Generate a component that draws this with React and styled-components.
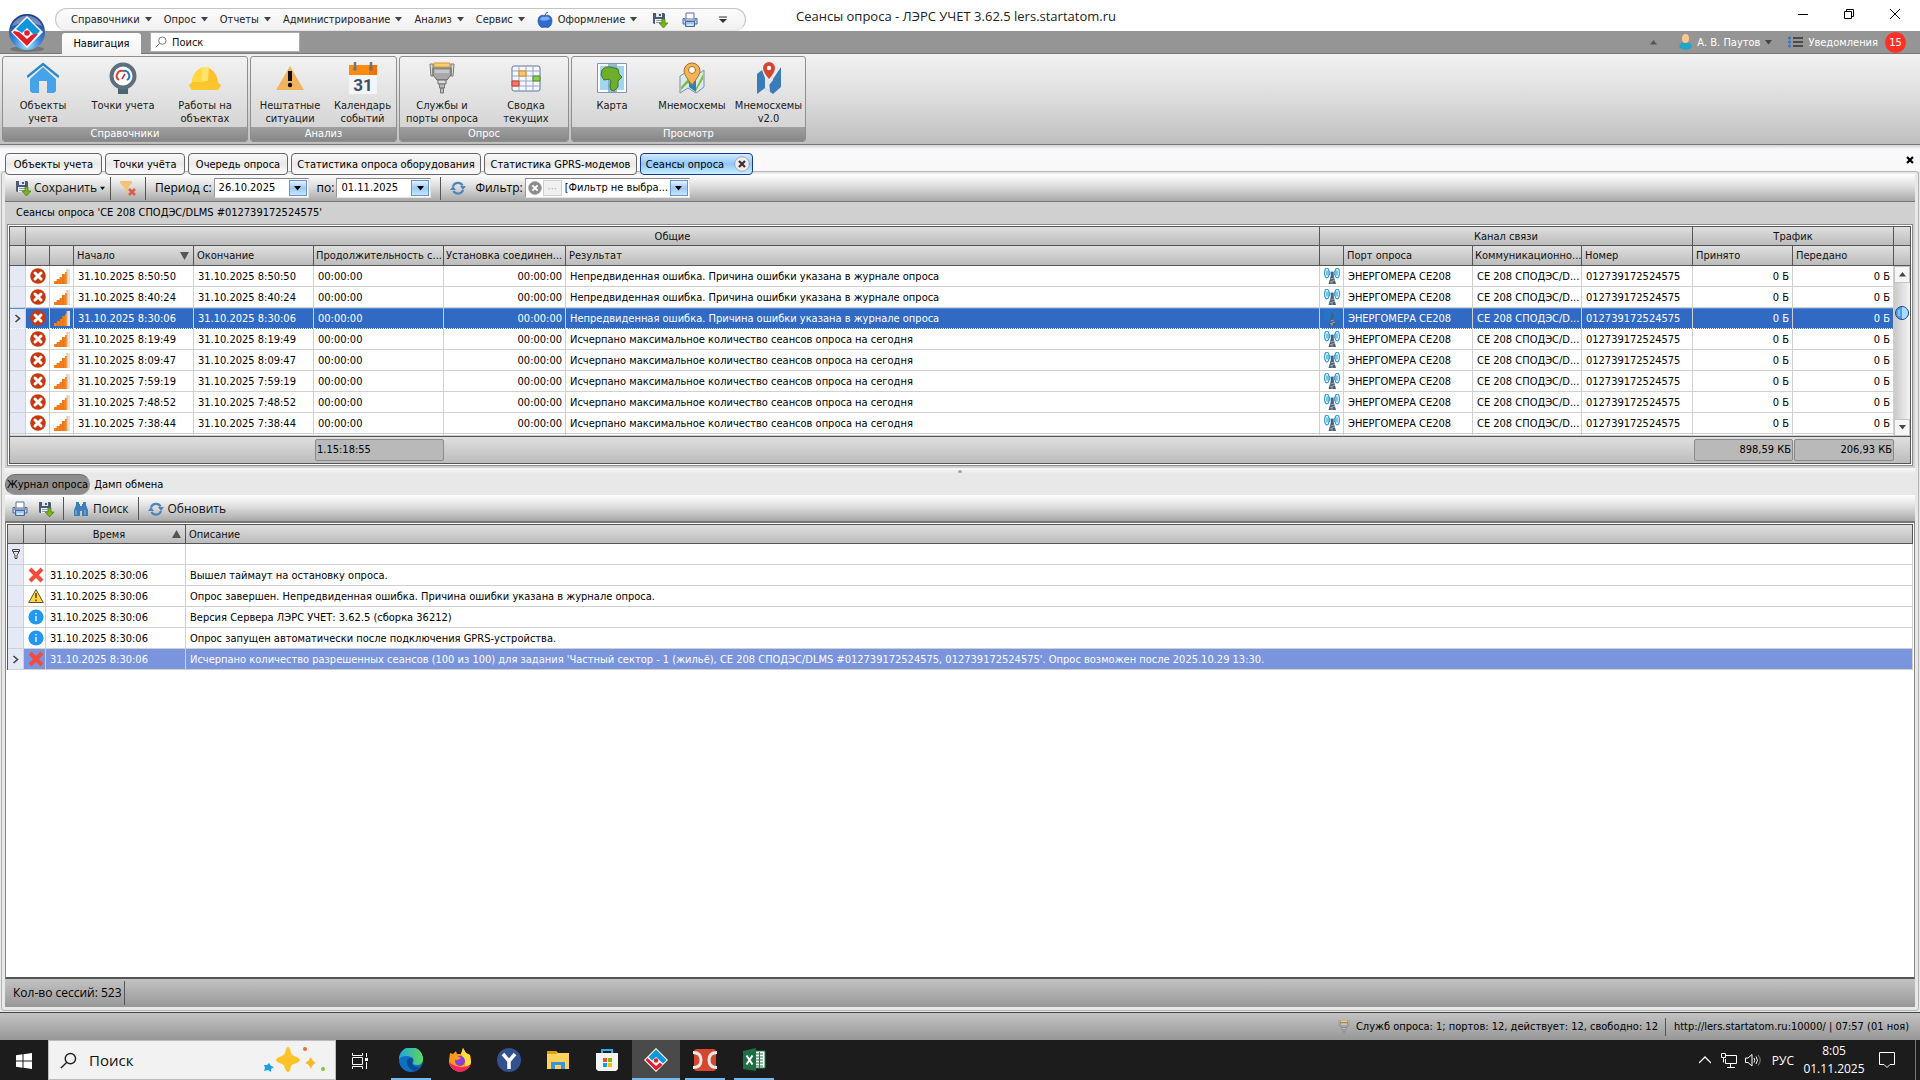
import React, { useState } from "react";
import styled, { createGlobalStyle, css } from "styled-components";

const UI = `"DejaVu Sans Condensed", "Liberation Sans", sans-serif`;
const SEGOE = `"Open Sans", "Noto Sans", sans-serif`;

const Global = createGlobalStyle`
  * { box-sizing: border-box; }
  html, body { margin: 0; padding: 0; }
  body { font-family: ${UI}; font-size: 11px; line-height: 13px; color: #000; background: #e8e8e8; }
  button, input, select { font: inherit; color: inherit; }
  button { background: none; border: 0; padding: 0; margin: 0; cursor: default; white-space: nowrap; }
  svg { display: block; flex: none; }
`;

const Window = styled.div`
  min-height: 100vh;
  display: flex;
  flex-direction: column;
`;

/* ---------- title bar ---------- */
const TitleArea = styled.header`
  position: relative;
`;
const TitleBar = styled.div`
  height: 31px;
  padding-right: 2px;
  display: flex;
  background: #fff;
`;
const QuickBar = styled.nav`
  margin: 8px 0 0 55px;
  width: 691px;
  height: 23px;
  border: 1px solid #c4c4c4;
  border-bottom-color: #e4e4e4;
  border-radius: 12px;
  background: linear-gradient(#fcfcfc, #f1f1f1);
  display: flex;
  align-items: center;
  padding: 0 15px;
  gap: 12px;
`;
const MenuButton = styled.button`
  display: flex;
  align-items: center;
  gap: 5px;
  color: #222;
`;
const IconButton = styled.button`
  display: flex;
  align-items: center;
  justify-content: center;
  width: ${(p) => p.$w || 16}px;
`;
const QuickIcons = styled.div`
  display: flex;
  align-items: center;
  gap: 14px;
  padding-left: 3px;
`;
const Title = styled.h1`
  flex: 1;
  margin: 0;
  padding-left: 50px;
  font: 400 13px/32px ${SEGOE};
  color: #222;
  white-space: nowrap;
`;
const WindowButtons = styled.div`
  display: flex;
  height: 28px;
`;
const WinButton = styled.button`
  width: 46px;
  display: flex;
  align-items: center;
  justify-content: center;
`;
const AppLogo = styled.button`
  position: absolute;
  left: 7px;
  top: 12px;
`;

/* ---------- ribbon ---------- */
const RibbonTabs = styled.div`
  height: 23px;
  background: #959595;
  border-bottom: 1px solid #777;
  padding: 0 14px 0 62px;
  display: flex;
  align-items: center;
`;
const RibbonTab = styled.button`
  align-self: flex-end;
  height: 21px;
  width: 79px;
  margin-bottom: -1px;
  border-radius: 3px 3px 0 0;
  background: linear-gradient(#fff, #f3f3f3);
`;
const SearchBox = styled.label`
  margin-left: 9px;
  width: 150px;
  height: 20px;
  border: 1px solid #ababab;
  background: #fff;
  display: flex;
  align-items: center;
  gap: 5px;
  padding: 0 4px;
`;
const PlainInput = styled.input`
  flex: 1;
  min-width: 0;
  border: 0;
  padding: 0;
  outline: 0;
  background: transparent;
  &::placeholder { color: #111; opacity: 1; }
`;
const UserArea = styled.div`
  margin-left: auto;
  display: flex;
  align-items: center;
  color: #fff;
  gap: 16px;
`;
const UserButton = styled.button`
  display: flex;
  align-items: center;
  gap: 5px;
`;
const Badge = styled.span`
  width: 21px;
  height: 21px;
  margin-left: 2px;
  border-radius: 50%;
  background: #ff3126;
  line-height: 21px;
  text-align: center;
`;
const Ribbon = styled.div`
  height: 91px;
  padding: 2px;
  display: flex;
  gap: 2px;
  background: linear-gradient(#f2f2f2, #dcdcdc 50%, #bfbfbf);
  border-bottom: 1px solid #777;
`;
const Group = styled.section`
  height: 86px;
  border: 1px solid #8f8f8f;
  border-radius: 3px;
  overflow: hidden;
  display: flex;
  flex-direction: column;
  background: linear-gradient(#f2f2f2, #cfcfcf);
`;
const GroupItems = styled.div`
  flex: 1;
  display: flex;
`;
const RibbonItem = styled.button`
  width: ${(p) => p.$w}px;
  padding-top: 5px;
  display: flex;
  flex-direction: column;
  align-items: center;
  gap: 5px;
  white-space: pre-line;
  color: #1a1a1a;
  text-align: center;
`;
const GroupCaption = styled.h2`
  margin: 0;
  height: 14px;
  font: inherit;
  line-height: 14px;
  text-align: center;
  color: #fff;
  background: linear-gradient(#a0a0a0, #868686);
`;

/* ---------- document tabs ---------- */
const DocTabs = styled.div`
  height: 26px;
  padding: 8px 5px 0;
  display: flex;
  gap: 3px;
  background: linear-gradient(#d4d4d4, #f9f9fc 4px);
`;
const DocTab = styled.button`
  position: relative;
  z-index: 1;
  flex: none;
  width: ${(p) => p.$w}px;
  height: 22px;
  border: 1px solid #666;
  border-radius: 4px;
  background: linear-gradient(#fafafa, #e9e9e9 50%, #fdfdfd);
  display: flex;
  align-items: center;
  justify-content: center;
  gap: 10px;
  ${(p) =>
    p.$active &&
    css`
      padding-left: 3px;
      border-color: #17389a;
      background: linear-gradient(#d5eaff, #8fc6fb 50%, #c9f0ff);
    `}
`;
const CloseAll = styled(IconButton)`
  margin-left: auto;
  height: 14px;
  width: 10px;
`;

/* ---------- document panel ---------- */
const Panel = styled.main`
  flex: 1;
  margin: 0 1px;
  padding: 2px 3px 3px;
  border: 1px solid #b4b4b4;
  border-radius: 3px;
  background: #e8e8e8;
  display: flex;
  flex-direction: column;
`;
const Toolbar = styled.div`
  height: 28px;
  padding: 1px ${(p) => p.$pad}px 0;
  display: flex;
  align-items: center;
  background: linear-gradient(#fff, #dedede 45%, #a9a9a9);
  border-bottom: ${(p) => p.$line}px solid #777;
  font: 12px/16px ${SEGOE};
`;
const ToolButton = styled.button`
  display: flex;
  align-items: center;
  gap: ${(p) => p.$gap || 4}px;
  margin-right: ${(p) => p.$r || 0}px;
  color: #111;
`;
const Sep = styled.span`
  width: 1px;
  height: ${(p) => p.$h || 23}px;
  margin: 0 ${(p) => p.$r || 9}px 0 ${(p) => p.$l || 9}px;
  background: #555;
`;
const Field = styled.div`
  display: flex;
  align-items: center;
  gap: 2px;
  margin-right: 8px;
`;
const ComboBox = styled.span`
  width: ${(p) => p.$w}px;
  height: 20px;
  padding: 1px;
  border: 1px solid #999;
  border-color: #888 #e4e4e4 #e4e4e4 #999;
  background: #fff;
  display: flex;
  font: 11px/16px ${UI};
`;
const DropButton = styled.button`
  width: 18px;
  border: 1px solid #6b93c4;
  background: linear-gradient(#e4f2ff, #9fc9f5 50%, #c5e6ff);
  display: flex;
  align-items: center;
  justify-content: center;
`;
const DateInput = styled(PlainInput)`
  padding-left: 3px;
`;
const FilterSelect = styled.select`
  flex: 1;
  min-width: 0;
  appearance: none;
  border: 0;
  outline: 0;
  padding: 0 0 0 3px;
  background: transparent;
`;
const MoreButton = styled.button`
  width: 19px;
  border: 1px solid #d0d0d0;
  background: #f0f0f0;
  color: #aaa;
  line-height: 9px;
`;

const Sessions = styled.section`
  background: #d0d0d0;
  padding: 0 2px 2px;
`;
const Caption = styled.h3`
  margin: 0;
  padding-left: 9px;
  font: inherit;
  line-height: 22px;
`;
const Frame = styled.div`
  border: 1px solid #8a8a8a;
  padding: 1px;
  background: #fff;
`;
const GridBox = styled.div`
  display: flex;
  border: 1px solid #555;
`;
const Grid = styled.table`
  flex: 1;
  width: 100%;
  table-layout: fixed;
  border-spacing: 0;
  background: #fff;
`;
const headSkin = css`
  background: linear-gradient(#dfdfdf, #bcbcbc);
  border-right: 1px solid #555;
  border-bottom: 1px solid #555;
`;
const Th = styled.th`
  ${headSkin}
  height: ${(p) => p.$h || 20}px;
  padding: 0 0 0 ${(p) => (p.$align ? 0 : p.$tight ? 2 : 3)}px;
  font-weight: 400;
  text-align: ${(p) => p.$align || "left"};
  white-space: nowrap;
  color: #111;
`;
const ThLine = styled.span`
  display: flex;
  align-items: center;
  padding-right: 4px;
`;
const ThText = styled.span`
  flex: 1;
`;
const Td = styled.td`
  height: ${(p) => p.$h || 21}px;
  padding: 0 ${(p) => (p.$right ? 3 : 0)}px 0 4px;
  border-right: 1px solid #d0d0d0;
  border-bottom: 1px solid #d0d0d0;
  text-align: ${(p) => (p.$right ? "right" : "left")};
  white-space: nowrap;
`;
const MarkTd = styled(Td)`
  && { background: #e4e9f5; color: #444; }
  padding: 0 0 0 4px;
`;
const IconTd = styled(Td)`
  padding: 0 0 0 4px;
`;
const Row = styled.tr`
  ${(p) =>
    p.$focus &&
    css`
      color: #fff;
      td { background: #316ac5; border-bottom: 1px dotted #fff; box-shadow: inset 0 1px #5d8ad6; }
    `}
  ${(p) =>
    p.$soft &&
    css`
      color: #fff;
      td { background: #7a94de; }
    `}
`;
const FootTd = styled.td`
  height: 27px;
  padding: 1px 0 1px 1px;
  border-top: 1px solid #555;
  background: linear-gradient(#dfdfdf, #bcbcbc);
`;
const Sum = styled.div`
  height: 22px;
  padding: 0 1px;
  border: 1px solid #8a8a8a;
  border-radius: 2px;
  background: #b9b9b9;
  line-height: 20px;
  text-align: ${(p) => (p.$right ? "right" : "left")};
`;
const Side = styled.div`
  width: 16px;
  display: flex;
  flex-direction: column;
`;
const SideHead = styled.div`
  ${headSkin}
  border-right: 0;
  height: ${(p) => p.$h}px;
`;
const SideFoot = styled.div`
  height: 27px;
  border-top: 1px solid #555;
  background: linear-gradient(#dfdfdf, #bcbcbc);
`;
const Scroll = styled.div`
  flex: 1;
  background: linear-gradient(90deg, #c9c9c9, #f4f4f4);
  display: flex;
  flex-direction: column;
  align-items: stretch;
`;
const ScrollButton = styled.button`
  height: 17px;
  border: 1px solid #c4c4c4;
  background: #f6f6f6;
  display: flex;
  align-items: center;
  justify-content: center;
`;
const ScrollTrack = styled.div`
  flex: 1;
  padding: 23px 1px 0;
`;

const Splitter = styled.div`
  height: 6px;
  display: flex;
  align-items: center;
  justify-content: center;
  background: linear-gradient(#f8f8f8, #e8e8e8);
  &::after { content: ""; width: 4px; height: 3px; border-radius: 2px; background: #aaa; }
`;
const LogTabs = styled.div`
  height: 21px;
  display: flex;
  align-items: stretch;
`;
const LogTab = styled.button`
  padding: 0 3px;
  border: 1px solid transparent;
  ${(p) =>
    p.$active &&
    css`
      padding: 0 1px;
      background: #8d8d8d;
      border-color: #707070 #9a9a9a #9a9a9a #707070;
      border-radius: 10px;
    `}
`;
const LogFrame = styled.section`
  flex: 1;
  border: 1px solid #888;
  border-top: 0;
  border-bottom: 2px solid #555;
  background: #fff;
  padding: 1px;
`;
const LogBox = styled.div`
  border-top: 1px solid #555;
  border-left: 1px solid #555;
`;
const CountBar = styled.footer`
  height: 28px;
  padding: 2px 8px;
  display: flex;
  align-items: center;
  background: linear-gradient(#c3c3c3, #979797);
  font: 12px/16px ${SEGOE};
`;
const StatusBar = styled.footer`
  margin-top: 1px;
  height: 28px;
  padding: 0 11px;
  border-top: 1px solid #444;
  display: flex;
  align-items: center;
  justify-content: flex-end;
  background: linear-gradient(#c3c3c3, #979797);
`;
const StatusText = styled.span`
  margin-left: 5px;
`;
const StatusLink = styled.a`
  color: inherit;
  text-decoration: none;
`;

/* ---------- taskbar ---------- */
const Taskbar = styled.footer`
  height: 40px;
  background: #1c1c1c;
  color: #fff;
  display: flex;
  font-family: ${SEGOE};
`;
const Slot = styled.button`
  width: 48px;
  margin-right: ${(p) => p.$gap || 0}px;
  padding: 2px ${(p) => (p.$active ? 0 : 4)}px 0;
  background: ${(p) => (p.$active ? "#4a4a4a" : "none")};
  display: flex;
  flex-direction: column;
  align-items: stretch;
`;
const SlotIcon = styled.span`
  flex: 1;
  display: flex;
  align-items: center;
  justify-content: center;
`;
const Underline = styled.span`
  height: 2px;
  background: ${(p) => (p.$on ? "#76b9ed" : "transparent")};
`;
const TaskSearch = styled.label`
  width: 288px;
  height: 40px;
  padding: 0 9px 0 11px;
  border: 1px solid #bdbdbd;
  background: #f2f2f2;
  color: #333;
  display: flex;
  align-items: center;
  gap: 12px;
  font-size: 15px;
`;
const Tray = styled.div`
  margin-left: auto;
  display: flex;
  align-items: center;
  padding-right: 4px;
`;
const TrayButton = styled.button`
  display: flex;
  margin-right: ${(p) => p.$r || 0}px;
  font-size: 12px;
`;
const Clock = styled.button`
  width: 62px;
  margin-right: 14px;
  font-size: 12px;
  line-height: 18px;
  text-align: center;
  white-space: pre-line;
`;
const DesktopEdge = styled.span`
  align-self: stretch;
  width: 1px;
  margin-left: 20px;
  background: #777;
`;

/* ---------- icons ---------- */
const Svg = ({ w = 16, h, vb, children }) => (
  <svg width={w} height={h || w} viewBox={vb || `0 0 ${w} ${h || w}`} aria-hidden="true">
    {children}
  </svg>
);
const Down = ({ c = "#444", w = 7, h = 5 }) => (
  <Svg w={w} h={h} vb="0 0 7 5"><path d="M0 0h7L3.500 4.500z" fill={c} /></Svg>
);
const Up = ({ c = "#444", w = 7, h = 5 }) => (
  <Svg w={w} h={h} vb="0 0 7 5"><path d="M0 4.500h7L3.500 0z" fill={c} /></Svg>
);
const SortDown = () => <Svg w={9} h={8}><path d="M0 0h9L4.500 8z" fill="#555" /></Svg>;
const SortUp = () => <Svg w={9} h={8}><path d="M0 8h9L4.500 0z" fill="#555" /></Svg>;
const LersMark = () => (
  <>
    <path d="M12 0 24 12 12 24 0 12z" fill="#fff" />
    <path d="M12 1.500 22.500 12 19 15.500 12 9 8 12.500 4.500 9z" fill="#0c96dc" />
    <path d="M3.500 10 12 18 16 14.500 18.500 17 12 22.500 1.500 12z" fill="#e41b2b" />
    <circle cx="12" cy="12.500" r="2.200" fill="#e41b2b" />
  </>
);
const Logo = () => (
  <svg width="40" height="42" viewBox="0 0 40 42" aria-hidden="true">
    <defs>
      <radialGradient id="orb" cx=".5" cy=".85" r=".9">
        <stop offset="0" stopColor="#9fe6ff" /><stop offset=".4" stopColor="#3f86dc" /><stop offset="1" stopColor="#17307c" />
      </radialGradient>
    </defs>
    <ellipse cx="20" cy="37" rx="17" ry="3" fill="#555" opacity=".5" />
    <circle cx="20" cy="20" r="18" fill="url(#orb)" />
    <path d="M5 14a16 16 0 0 1 30 0q-15-7-30 0z" fill="#fff" opacity=".35" />
    <path d="M20 4 36 20 20 36 4 20z" fill="#fff" />
    <path d="M20 6 33 19 28 24 20 16 15 21 9 17z" fill="#0c96dc" />
    <path d="M7 19 12 20 20 27 25 22.500 31 22 20 34 6 20.500z" fill="#e41b2b" />
    <circle cx="20" cy="21" r="2.800" fill="#e41b2b" />
  </svg>
);
const Save = () => (
  <Svg>
    <path d="M1 1h11l1 1v10H2l-1-1z" fill="#4a5a72" /><path d="M4 1h6v4H4z" fill="#dfe6ef" /><path d="M7 2h2v2H7z" fill="#4a5a72" /><path d="M3 7h8v5H3z" fill="#eef2f7" />
    <path d="M4 8.500h6M4 10.500h6" stroke="#8a9ab0" />
    <path d="M10 7h3v4h3l-4.500 5L7 11h3z" fill="#7cb518" stroke="#3f7d0a" strokeWidth=".7" />
  </Svg>
);
const Print = () => (
  <Svg>
    <path d="M4 1h8v6H4z" fill="#fff" stroke="#56709e" /><path d="M1 6.500h2V9h10V6.500h2V12H1z" fill="#c9d8ef" stroke="#4b659a" />
    <path d="M3.500 9.500h9v5h-9z" fill="#9cc9f5" stroke="#4b659a" /><path d="M5 13h6" stroke="#fff" />
  </Svg>
);
const Apple = () => (
  <Svg>
    <path d="M8 4C5 2 1 4 1 9c0 4 3 7 5 6.500 1-.5 3-.5 4 0 2 .5 5-2.500 5-6.500 0-5-4-7-7-5z" fill="#2e6bd0" stroke="#1c3f94" strokeWidth=".6" />
    <path d="M3 8c0-3 3-4 5-3 2-1 4 0 5 2-3 2-7 2-10 1z" fill="#9cc8fa" opacity=".7" /><path d="M8 4C8 2 9 1 11 0" stroke="#1c3f94" fill="none" />
  </Svg>
);
const Lens = ({ w = 12, c = "#777" }) => (
  <Svg w={w} vb="0 0 18 18"><circle cx="11" cy="7" r="5.500" fill="none" stroke={c} strokeWidth="1.500" /><path d="M7 11 1 17" stroke={c} strokeWidth="1.500" /></Svg>
);
const Refresh = () => (
  <Svg>
    <path d="M3 6.500a5.200 5.200 0 0 1 9.500-1" fill="none" stroke="#4c86bd" strokeWidth="2.300" /><path d="M10 6h6l-3 4z" fill="#4c86bd" />
    <path d="M13 10a5.200 5.200 0 0 1-9.500 1" fill="none" stroke="#4c86bd" strokeWidth="2.300" /><path d="M0 10h6L3 6z" fill="#4c86bd" />
  </Svg>
);
const Funnel = () => (
  <Svg>
    <path d="M0 1h12v2L8 8v6l-3-2V8L0 3z" fill="#f3c277" /><path d="m9 9 6 6M15 9l-6 6" stroke="#dd5b3e" strokeWidth="2.500" />
  </Svg>
);
const Binoculars = () => (
  <Svg>
    <path d="M3 1h3v2h1v2h2V3h1V1h3v3l2 5v6H9v-5H7v5H1V9l2-5z" fill="#3f7fb8" /><path d="M3 9v5M12 9v5" stroke="#8cb8de" />
  </Svg>
);
const ErrorIcon = () => (
  <Svg>
    <circle cx="8" cy="8" r="7.800" fill="#c8380f" /><path d="M5 5l6 6M11 5l-6 6" stroke="#fff" strokeWidth="3" strokeLinecap="round" />
  </Svg>
);
const Signal = () => (
  <Svg>
    <path d="M0 16v-3h3v-2h3V9h2V6h3V4h2v12z" fill="#f58220" /><path d="M3 11v5M6 9v7M9 6v10" stroke="#d9600b" strokeWidth=".6" />
    <path d="M13 1h3v15h-3z" fill="#dfe3ea" /><path d="M13 1v15" stroke="#f7b35b" />
  </Svg>
);
const Antenna = ({ dim }) => (
  <Svg>
    <g fill="none" stroke={dim ? "#1c7fc4" : "#2a9bd8"} strokeWidth="1.200">
      <ellipse cx="2.800" cy="5" rx="2.200" ry="4.800" /><path d="M3 2.500v5M5.500 3q1 2 0 4" />
      <ellipse cx="13.200" cy="5" rx="2.200" ry="4.800" /><path d="M13 2.500v5M10.500 3q-1 2 0 4" />
    </g>
    <path d="M7 6h2.500l.5 3 2 7H4.500l2-7z" fill={dim ? "#456080" : "#4d6072"} /><path d="m6.500 11 3.500-1M6 14l5-2M8 13v3" stroke="#b8c4d0" strokeWidth=".7" />
    <circle cx="8.200" cy="5" r="1.400" fill="#4d6072" />
  </Svg>
);
const RedCross = () => (
  <Svg><path d="m2 2 12 12M14 2 2 14" stroke="#f44b3a" strokeWidth="4" /></Svg>
);
const Warn = () => (
  <Svg>
    <path d="M8 1.500 15.300 14.500H.7z" fill="#ffd54a" stroke="#665322" strokeLinejoin="round" /><path d="M8 5v5M8 11.500v1.800" stroke="#5b4a12" strokeWidth="1.600" />
  </Svg>
);
const Info = () => (
  <Svg><circle cx="8" cy="8" r="7.600" fill="#2196f3" /><path d="M8 7v5M8 4v1.600" stroke="#d5ecff" strokeWidth="1.600" /></Svg>
);
const Mark = () => (
  <Svg w={7} h={9}><path d="m1.500 1 4 3.500-4 3.500" fill="none" stroke="#444" strokeWidth="1.600" /></Svg>
);
const FilterMark = () => (
  <Svg w={8} h={10}><path d="M.5.500h7v2h-7zM1.500 3v1L3 6v3.500h2V6l1.500-2V3" fill="none" stroke="#444" /></Svg>
);
const Plug = ({ w = 32 }) => (
  <Svg w={w} vb="0 0 32 32">
    <path d="M8 1h16v4H8z" fill="#f9cf75" stroke="#d8962a" /><path d="M4 2h3v12H5zM25 2h3l-1 12h-2z" fill="#ddd" stroke="#777" />
    <path d="M7 6h18v7l-4 5H11l-4-5z" fill="#a8a8a8" stroke="#666" /><path d="M9 8h14v3H9z" fill="#c8c8c8" />
    <path d="M12 18h8v4h-8z" fill="#ddd" stroke="#666" /><path d="M13.500 22h5v4h-5zM14.500 26h3v5h-3z" fill="#bbb" stroke="#777" />
  </Svg>
);
const big = {
  home: (
    <Svg w={32}>
      <path d="M16 5 29 17v12l-2 2h-7V19h-8v12H5l-2-2V17z" fill="#46a3ea" />
      <path d="M0 17 16 3l16 14" fill="none" stroke="#ececec" strokeWidth="2" />
      <path d="M0 15 16 2l16 13" fill="none" stroke="#2f86c8" strokeWidth="2.500" />
    </Svg>
  ),
  gauge: (
    <Svg w={32}>
      <path d="M11 24h10v8H11z" fill="#4d6475" /><circle cx="16" cy="14" r="11.500" fill="#fff" stroke="#5b6f7f" strokeWidth="4" />
      <path d="M12 18a5 5 0 0 1 4-9" fill="none" stroke="#e0402e" strokeWidth="2" /><path d="M16 9a5 5 0 0 1 4 9" fill="none" stroke="#2878d0" strokeWidth="2" />
      <path d="m15 17 3-5" stroke="#c0392b" strokeWidth="1.500" />
    </Svg>
  ),
  helmet: (
    <Svg w={32}>
      <path d="M3 22C3 13 8 7 13 6l1-1h4l1 1c5 1 10 7 10 16z" fill="#fdc02f" /><path d="M3 22C3 13 8 7 13 6v9l3-10v17z" fill="#ffd83b" />
      <path d="M12 5h8l-1 14h-6z" fill="#ffe36a" /><path d="M0 24q2-4 5-4h22q3 0 5 4l-3 4H3z" fill="#fbc52d" />
    </Svg>
  ),
  alert: (
    <Svg w={32}><path d="M16 4 30 28H2z" fill="#f0b45f" /><path d="M14 9h4v10h-4z" fill="#111" /><circle cx="16" cy="23" r="2.200" fill="#111" /></Svg>
  ),
  calendar: (
    <Svg w={32}>
      <path d="M2 12h28v20H2z" fill="#f3f6f8" /><path d="M2 3h28v10H2z" fill="#ff8a0d" /><path d="M22 3h8v10h-8z" fill="#ff6f00" />
      <path d="M8 0v6M24 0v6" stroke="#667780" strokeWidth="2.500" /><circle cx="8" cy="7" r="1.800" fill="#667780" /><circle cx="24" cy="7" r="1.800" fill="#667780" />
      <text x="16" y="29" fontSize="17" fontWeight="700" textAnchor="middle" fill="#3c5261" fontFamily="Roboto, sans-serif">31</text>
    </Svg>
  ),
  plug: <Plug />,
  table: (
    <Svg w={32}>
      <rect x="2" y="4" width="28" height="25" rx="2" fill="#f6f8fd" stroke="#6174a6" />
      <path d="M9 4v25M16 4v25M23 4v25M2 9h28M2 14h28M2 19h28M2 24h28" stroke="#95a3c8" fill="none" />
      <path d="M9 9h7v5H9z" fill="#ffc76b" stroke="#d88a1a" /><path d="M23 14h7v5h-7z" fill="#8fce4a" stroke="#4f9218" /><path d="M2 19h7v5H2z" fill="#f07a6a" stroke="#c93a2a" />
    </Svg>
  ),
  map: (
    <Svg w={32}>
      <path d="M1.500 1.500h29v29h-29z" fill="#fff" stroke="#8097b4" /><path d="M4 4h24v24H4z" fill="#a3d4f1" /><path d="M12 2h9v28h-9z" fill="#6f9cc4" opacity=".7" />
      <path d="M6 8q3-4 8-3l4 1 4 1 1 5 3 3-4 4v6l-4 4-3-1-1-4 1-5-2-2-5 1-3-5z" fill="#6fae2c" stroke="#3f7d18" />
    </Svg>
  ),
  pinGold: (
    <Svg w={32}>
      <path d="M4 14 12 9l8 5 8-6v17l-8 6-8-5-8 5z" fill="#d8e9f4" stroke="#7e8f9d" /><path d="m5 25 7-8 8 9 7-14v5l-7 12-8-8-7 7z" fill="#7dbb3a" /><path d="M13 19 20 16v14l-7-5z" fill="#2e80b8" />
      <path d="M16 23Q8 13 8 9a8 8 0 0 1 16 0q0 4-8 14z" fill="#f2b457" stroke="#a9702a" /><circle cx="16" cy="8" r="3.500" fill="#fff" stroke="#a9702a" />
    </Svg>
  ),
  pinRed: (
    <Svg w={32}>
      <path d="M4 12 9 8l3 8v10l-8 6zM12 26l8 6V18l-3 4M20 17l8-12v20l-8 7z" fill="#3a7cb8" />
      <path d="M12 17v9l5 4-1-12z" fill="#e6e6e6" />
      <path d="M16 17Q10 10 10 6a6 6 0 0 1 12 0q0 4-6 11z" fill="#d8452f" /><circle cx="16" cy="6" r="2.200" fill="#fff" />
    </Svg>
  ),
};
const Person = () => (
  <Svg w={13} h={16}><path d="M0 13q1-5 6.500-5T13 13q-3 3-6.500 3T0 13z" fill="#1fa6c8" /><ellipse cx="6.500" cy="4.500" rx="3.500" ry="4.500" fill="#fbc98e" /></Svg>
);
const ListIcon = () => (
  <Svg w={15} h={12}>
    <path d="M5 2h10M5 6h10M5 10h10" stroke="#000" /><circle cx="1.500" cy="2" r="1.500" fill="#2b78c5" /><circle cx="1.500" cy="6" r="1.500" fill="#2b78c5" /><circle cx="1.500" cy="10" r="1.500" fill="#2b78c5" />
  </Svg>
);
const CloseBall = ({ w = 16, bg = "#ececec", c = "#333" }) => (
  <Svg w={w} vb="0 0 16 16"><circle cx="8" cy="8" r="7.300" fill={bg} stroke="#9a9a9a" strokeWidth=".8" /><path d="m5 5 6 6M11 5l-6 6" stroke={c} strokeWidth="2.200" /></Svg>
);
const Sparkles = () => (
  <Svg w={62} h={26}>
    <path d="M24 0q2 0 3 6 1 2 3 3 6 2 6 4t-6 4q-2 0-3 2-1 6-3 6t-4-6q0-1-2-2-6-2-6-4t6-4q2-1 3-3 1-6 3-6z" fill="#fcc327" />
    <path d="M47 10q1 4 5 6-4 1-5 6-2-5-6-6 4-2 6-6z" fill="#f9b626" /><path d="m5 16 2 3 3 1-3 2v3l-3-2-4 1 1-3-1-3h3z" fill="#1ba0e8" />
    <circle cx="41" cy="2" r="2" fill="#ee6a2d" /><circle cx="59" cy="22" r="2" fill="#7fc342" />
  </Svg>
);
const tasks = [
  { name: "Microsoft Edge", open: true, icon: (
    <Svg w={24}>
      <defs><linearGradient id="eg" x1="0" x2="1"><stop offset="0" stopColor="#1fa4e0" /><stop offset="1" stopColor="#5fd85b" /></linearGradient></defs>
      <circle cx="12" cy="12" r="12" fill="#0f6fc4" /><path d="M0 11A12 12 0 0 1 24 11c0 4-3 6-6 6-3 0-4-1-4-2 1-2 1-5-2-6C8 7 2 8 0 11z" fill="url(#eg)" />
      <path d="M8 12c-1 5 3 10 8 11l6-5c-3 2-8 1-9-3 0-2 1-2 1-4-2-2-5-1-6 1z" fill="#0a4a94" />
    </Svg>) },
  { name: "Firefox", icon: (
    <Svg w={24}>
      <path d="M2 5l3 1 3-3 1 3 4 0 2-6 3 5 4 2 1 6a11 10.500 0 1 1-22 0z" fill="#ff9a1f" /><path d="M15 0l3 5 4 2 1 7q-1 6-7 8 4-8-3-16z" fill="#ffdd3c" />
      <path d="M1 14q2 9 11 10 8-1 11-8-5 4-11 3-7-1-11-5z" fill="#f0285c" /><circle cx="12" cy="13" r="5" fill="#8b3fd6" /><path d="M5 9q4-2 8 1-2 2-5 2z" fill="#ff9a1f" />
    </Svg>) },
  { name: "Яндекс Браузер", icon: (
    <Svg w={24}><circle cx="12" cy="12" r="12" fill="#33508f" /><path d="m6 6 6 7 6-7M12 13v8" fill="none" stroke="#fff" strokeWidth="3.500" /></Svg>) },
  { name: "Проводник", icon: (
    <Svg w={24}><path d="M1 3h9l2 2h11v16H1z" fill="#ffd35c" /><path d="M1 3h9l1 3H1z" fill="#e0a010" /><path d="M5 21v-7h14v7h-4v-4H9v4z" fill="#3d92d8" /></Svg>) },
  { name: "Microsoft Store", icon: (
    <Svg w={24}>
      <path d="M7 7V2h10v5" fill="none" stroke="#22b4ee" strokeWidth="2" /><path d="M1 5h22v16l-2 2H3l-2-2z" fill="#f5f5f5" />
      <path d="M8 10h4v4H8z" fill="#f25022" /><path d="M13 10h4v4h-4z" fill="#7fba00" /><path d="M8 15h4v4H8z" fill="#00a4ef" /><path d="M13 15h4v4h-4z" fill="#ffb900" />
    </Svg>) },
  { name: "ЛЭРС УЧЕТ", open: true, active: true, icon: <Svg w={24}><LersMark /></Svg> },
  { name: "Диспетчер", open: true, icon: (
    <Svg w={24}><rect x="1" y="1" width="22" height="22" rx="3" fill="#d8452f" /><path d="M0 4.500q8 0 8 7.500t-8 7.500M24 4.500q-8 0-8 7.500t8 7.500" fill="none" stroke="#eaeaea" strokeWidth="3" /></Svg>) },
  { name: "Excel", open: true, icon: (
    <Svg w={24}>
      <path d="M12 3h11v17H12z" fill="#fff" stroke="#1f7a45" /><path d="M14 6h7M14 9h7M14 12h7M14 15h7M14 18h7M17.500 4v16" stroke="#1f7a45" /><path d="M1 3l13-3v23L1 21z" fill="#1d7044" />
      <path d="m4.500 7.500 6 9M10.500 7.500l-6 9" stroke="#fff" strokeWidth="2" />
    </Svg>) },
];

/* ---------- data ---------- */
const menus = ["Справочники", "Опрос", "Отчеты", "Администрирование", "Анализ", "Сервис"];
const groups = [
  ["Справочники", [["home", "Объекты\nучета", 80], ["gauge", "Точки учета", 80], ["helmet", "Работы на\nобъектах", 84]]],
  ["Анализ", [["alert", "Нештатные\nситуации", 78], ["calendar", "Календарь\nсобытий", 67]]],
  ["Опрос", [["plug", "Службы и\nпорты опроса", 84], ["table", "Сводка\nтекущих", 84]]],
  ["Просмотр", [["map", "Карта", 80], ["pinGold", "Мнемосхемы", 80], ["pinRed", "Мнемосхемы\nv2.0", 73]]],
];
const docs = [
  ["Объекты учета", 97],
  ["Точки учёта", 80],
  ["Очередь опроса", 100],
  ["Статистика опроса оборудования", 190],
  ["Статистика GPRS-модемов", 153],
  ["Сеансы опроса", 113],
];
const unexpected = "Непредвиденная ошибка. Причина ошибки указана в журнале опроса";
const exhausted = "Исчерпано максимальное количество сеансов опроса на сегодня";
const sessions = [
  ["8:50:50", unexpected], ["8:40:24", unexpected], ["8:30:06", unexpected], ["8:19:49", exhausted],
  ["8:09:47", exhausted], ["7:59:19", exhausted], ["7:48:52", exhausted], ["7:38:44", exhausted],
];
const sessionCols = [16, 24, 24, 120, 120, 130, 122, null, 24, 129, 109, 111, 100, 101];
const log = [
  [RedCross, "Вышел таймаут на остановку опроса."],
  [Warn, "Опрос завершен. Непредвиденная ошибка. Причина ошибки указана в журнале опроса."],
  [Info, "Версия Сервера ЛЭРС УЧЕТ: 3.62.5 (сборка 36212)"],
  [Info, "Опрос запущен автоматически после подключения GPRS-устройства."],
  [RedCross, "Исчерпано количество разрешенных сеансов (100 из 100) для задания 'Частный сектор - 1 (жильё), СЕ 208 СПОДЭС/DLMS #012739172524575, 012739172524575'. Опрос возможен после 2025.10.29 13:30."],
];

const DateField = ({ id, label, value }) => {
  const [v, setV] = useState(value);
  return (
    <Field>
      <label htmlFor={id}>{label}</label>
      <ComboBox $w={95}>
        <DateInput id={id} value={v} onChange={(e) => setV(e.target.value)} />
        <DropButton aria-label="Открыть календарь"><Down c="#000" /></DropButton>
      </ComboBox>
    </Field>
  );
};

const SessionsTable = () => (
  <Frame>
    <GridBox>
      <Grid>
        <colgroup>{sessionCols.map((w, i) => <col key={i} width={w || undefined} />)}</colgroup>
        <thead>
          <tr>
            <Th $h={19} />
            <Th $h={19} colSpan={7} $align="center">Общие</Th>
            <Th $h={19} colSpan={4} $align="center">Канал связи</Th>
            <Th $h={19} colSpan={2} $align="center">Трафик</Th>
          </tr>
          <tr>
            <Th /><Th /><Th />
            <Th><ThLine><ThText>Начало</ThText><SortDown /></ThLine></Th>
            <Th>Окончание</Th>
            <Th $tight>Продолжительность с...</Th>
            <Th $tight>Установка соединен...</Th>
            <Th>Результат</Th>
            <Th />
            <Th>Порт опроса</Th>
            <Th $tight>Коммуникационно...</Th>
            <Th>Номер</Th>
            <Th>Принято</Th>
            <Th>Передано</Th>
          </tr>
        </thead>
        <tbody>
          {sessions.map(([time, result], i) => {
            const focus = i === 2;
            return (
              <Row key={time} $focus={focus}>
                <MarkTd>{focus && <Mark />}</MarkTd>
                <IconTd><ErrorIcon /></IconTd>
                <IconTd><Signal /></IconTd>
                <Td>31.10.2025 {time}</Td>
                <Td>31.10.2025 {time}</Td>
                <Td>00:00:00</Td>
                <Td $right>00:00:00</Td>
                <Td>{result}</Td>
                <IconTd><Antenna dim={focus} /></IconTd>
                <Td>ЭНЕРГОМЕРА CE208</Td>
                <Td>СЕ 208 СПОДЭС/D...</Td>
                <Td>012739172524575</Td>
                <Td $right>0 Б</Td>
                <Td $right>0 Б</Td>
              </Row>
            );
          })}
          <tr>
            <MarkTd $h={2} />
            {sessionCols.slice(1).map((_, i) => <Td key={i} $h={2} />)}
          </tr>
        </tbody>
        <tfoot>
          <tr>
            <FootTd colSpan={5} />
            <FootTd><Sum>1.15:18:55</Sum></FootTd>
            <FootTd colSpan={6} />
            <FootTd><Sum $right>898,59 КБ</Sum></FootTd>
            <FootTd><Sum $right>206,93 КБ</Sum></FootTd>
          </tr>
        </tfoot>
      </Grid>
      <Side>
        <SideHead $h={19} />
        <SideHead $h={20} />
        <Scroll>
          <ScrollButton aria-label="Вверх"><Up /></ScrollButton>
          <ScrollTrack>
            <Svg w={14}>
              <circle cx="7" cy="7" r="6.500" fill="#4f9bea" stroke="#23407c" /><path d="M7 1a6 6 0 0 1 0 12z" fill="#a8dcff" /><path d="M4 4v6" stroke="#cfe8ff" />
            </Svg>
          </ScrollTrack>
          <ScrollButton aria-label="Вниз"><Down /></ScrollButton>
        </Scroll>
        <SideFoot />
      </Side>
    </GridBox>
  </Frame>
);

const LogTable = () => (
  <LogBox>
    <Grid>
      <colgroup><col width={16} /><col width={22} /><col width={140} /><col /></colgroup>
      <thead>
        <tr>
          <Th $h={19} /><Th $h={19} />
          <Th $h={19} $align="center"><ThLine><ThText>Время</ThText><SortUp /></ThLine></Th>
          <Th $h={19}>Описание</Th>
        </tr>
      </thead>
      <tbody>
        <tr><MarkTd><FilterMark /></MarkTd><Td /><Td /><Td /></tr>
        {log.map(([Icon, text], i) => {
          const sel = i === log.length - 1;
          return (
            <Row key={i} $soft={sel}>
              <MarkTd>{sel && <Mark />}</MarkTd>
              <IconTd><Icon /></IconTd>
              <Td>31.10.2025 8:30:06</Td>
              <Td>{text}</Td>
            </Row>
          );
        })}
      </tbody>
    </Grid>
  </LogBox>
);

export default function App() {
  return (
    <Window>
      <Global />
      <TitleArea>
        <TitleBar>
          <QuickBar aria-label="Меню">
            {menus.map((m) => <MenuButton key={m}>{m}<Down /></MenuButton>)}
            <MenuButton><Apple />Оформление<Down /></MenuButton>
            <QuickIcons>
              <IconButton aria-label="Сохранить"><Save /></IconButton>
              <IconButton aria-label="Печать"><Print /></IconButton>
              <IconButton aria-label="Настройка панели" $w={22}>
                <Svg w={8} h={8}><path d="M0 1h8" stroke="#333" /><path d="M0 3h8L4 7z" fill="#333" /></Svg>
              </IconButton>
            </QuickIcons>
          </QuickBar>
          <Title>Сеансы опроса - ЛЭРС УЧЕТ 3.62.5 lers.startatom.ru</Title>
          <WindowButtons>
            <WinButton aria-label="Свернуть"><Svg w={10}><path d="M0 5.500h10" stroke="#000" /></Svg></WinButton>
            <WinButton aria-label="Восстановить"><Svg w={10}><path d="M.5 2.500h7v7h-7zM2.500 2.500v-2h7v7h-2" fill="none" stroke="#000" /></Svg></WinButton>
            <WinButton aria-label="Закрыть"><Svg w={10}><path d="m0 0 10 10M10 0 0 10" stroke="#000" /></Svg></WinButton>
          </WindowButtons>
        </TitleBar>
        <RibbonTabs>
          <RibbonTab>Навигация</RibbonTab>
          <SearchBox><Lens /><PlainInput placeholder="Поиск" aria-label="Поиск по меню" /></SearchBox>
          <UserArea>
            <IconButton aria-label="Свернуть ленту" $w={20}><Up c="#555" /></IconButton>
            <UserButton><Person />А. В. Паутов<Down /></UserButton>
            <UserButton><ListIcon />Уведомления<Badge>15</Badge></UserButton>
          </UserArea>
        </RibbonTabs>
        <AppLogo aria-label="ЛЭРС УЧЕТ"><Logo /></AppLogo>
      </TitleArea>
      <Ribbon>
        {groups.map(([name, items]) => (
          <Group key={name}>
            <GroupItems>
              {items.map(([icon, label, w]) => (
                <RibbonItem key={label} $w={w}>{big[icon]}<span>{label}</span></RibbonItem>
              ))}
            </GroupItems>
            <GroupCaption>{name}</GroupCaption>
          </Group>
        ))}
      </Ribbon>
      <DocTabs>
        {docs.map(([d, w], i) => (
          <DocTab key={d} $w={w} $active={i === 5}>{d}{i === 5 && <CloseBall />}</DocTab>
        ))}
        <CloseAll aria-label="Закрыть вкладку">
          <Svg w={8}><path d="m1 1 6 6M7 1 1 7" stroke="#000" strokeWidth="2.200" /></Svg>
        </CloseAll>
      </DocTabs>
      <Panel>
        <Toolbar $pad={10} $line={1}>
          <ToolButton $gap={3}><Save />Сохранить<Down c="#111" w={5} /></ToolButton>
          <Sep $l={5} />
          <ToolButton aria-label="Сбросить фильтр"><Funnel /></ToolButton>
          <Sep />
          <DateField id="from" label="Период с:" value="26.10.2025" />
          <DateField id="to" label="по:" value="01.11.2025" />
          <Sep $l={1} />
          <ToolButton aria-label="Обновить список" $r={9}><Refresh /></ToolButton>
          <Field>
            <label htmlFor="filter">Фильтр:</label>
            <ComboBox $w={165}>
              <IconButton aria-label="Очистить фильтр"><CloseBall w={14} bg="#8c8c8c" c="#fff" /></IconButton>
              <MoreButton aria-label="Выбрать фильтр">···</MoreButton>
              <FilterSelect id="filter"><option>[Фильтр не выбра...</option></FilterSelect>
              <DropButton aria-label="Открыть список"><Down c="#000" /></DropButton>
            </ComboBox>
          </Field>
        </Toolbar>
        <Sessions>
          <Caption>Сеансы опроса 'СЕ 208 СПОДЭС/DLMS #012739172524575'</Caption>
          <SessionsTable />
        </Sessions>
        <Splitter />
        <LogTabs>
          <LogTab $active>Журнал опроса</LogTab>
          <LogTab>Дамп обмена</LogTab>
        </LogTabs>
        <Toolbar $pad={7} $line={2}>
          <ToolButton aria-label="Печать журнала" $r={10}><Print /></ToolButton>
          <ToolButton aria-label="Сохранить журнал"><Save /></ToolButton>
          <Sep />
          <ToolButton><Binoculars />Поиск</ToolButton>
          <Sep />
          <ToolButton><Refresh />Обновить</ToolButton>
        </Toolbar>
        <LogFrame><LogTable /></LogFrame>
        <CountBar>Кол-во сессий: 523<Sep $h={24} $l={2} /></CountBar>
      </Panel>
      <StatusBar>
        <Plug w={14} />
        <StatusText>Служб опроса: 1; портов: 12, действует: 12, свободно: 12</StatusText>
        <Sep $h={18} $l={7} $r={8} />
        <StatusLink href="#server">http://lers.startatom.ru:10000/ | 07:57 (01 ноя)</StatusLink>
      </StatusBar>
      <Taskbar>
        <Slot aria-label="Пуск">
          <SlotIcon>
            <Svg w={16}><path d="M0 2.200 6.500 1.300V7.500H0zM7.500 1.200 16 0v7.500H7.500zM0 8.500h6.500v6.200L0 13.800zM7.500 8.500H16V16l-8.500-1.200z" fill="#fff" /></Svg>
          </SlotIcon>
        </Slot>
        <TaskSearch><Lens w={17} c="#222" /><PlainInput placeholder="Поиск" aria-label="Поиск в Windows" /><Sparkles /></TaskSearch>
        <Slot aria-label="Представление задач" $gap={3}>
          <SlotIcon>
            <Svg w={16}><path d="M.5 0v2.500h10V0M.5 16v-2.500h10V16M.5 4.500h10v7H.5zM14.500 0v4M14.500 9v7" fill="none" stroke="#fff" /><path d="M13 5h3v3h-3z" fill="#fff" /></Svg>
          </SlotIcon>
        </Slot>
        {tasks.map((t) => (
          <Slot key={t.name} aria-label={t.name} $active={t.active} $gap={1}>
            <SlotIcon>{t.icon}</SlotIcon><Underline $on={t.open} />
          </Slot>
        ))}
        <Tray>
          <TrayButton aria-label="Скрытые значки" $r={10}><Svg w={12} h={8}><path d="m0 7 6-6 6 6" fill="none" stroke="#fff" strokeWidth="1.300" /></Svg></TrayButton>
          <TrayButton aria-label="Сеть" $r={8}><Svg w={16}><path d="M5 3.500h10.500v8H4.500V7M9.500 12v3M6 15.500h8M.5 1.500h4v4h-4zM2.500 5.500v5" fill="none" stroke="#fff" /></Svg></TrayButton>
          <TrayButton aria-label="Громкость" $r={11}><Svg w={16}><path d="M.5 6v4.500H3l4 3.500V2.500L3 6z" fill="none" stroke="#fff" /><path d="M9 6q1.500 2.300 0 4.500M11 4.500q3 3.800 0 7.500" fill="none" stroke="#fff" /><path d="M13 3q4.500 5 0 10.500" fill="none" stroke="#888" /></Svg></TrayButton>
          <TrayButton $r={9}>РУС</TrayButton>
          <Clock>{"8:05\n01.11.2025"}</Clock>
          <TrayButton aria-label="Уведомления"><Svg w={16}><path d="M.5.500h15v12H11l-3 3-3-3H.500z" fill="none" stroke="#fff" /></Svg></TrayButton>
          <DesktopEdge />
        </Tray>
      </Taskbar>
    </Window>
  );
}
